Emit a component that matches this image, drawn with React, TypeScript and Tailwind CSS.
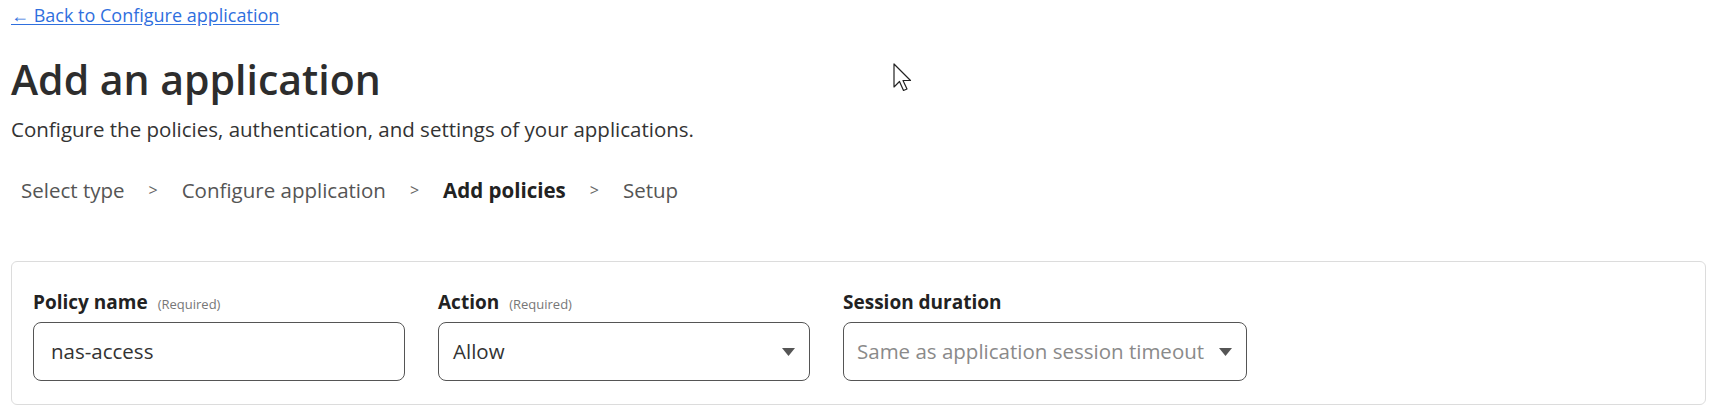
import React from "react";

function Caret() {
  return (
    <svg width="13" height="8" viewBox="0 0 13 8" className="shrink-0">
      <path d="M0 0 H13 L6.5 8 Z" fill="#555555" />
    </svg>
  );
}

function Cursor() {
  return (
    <svg
      width="20"
      height="30"
      viewBox="0 0 20 30"
      className="absolute left-[893px] top-[63px]"
    >
      <path
        d="M1 1 L1 24 L6.5 18.5 L10.5 27.5 L14 26 L10 17.5 L17.5 17.5 Z"
        fill="#ffffff"
        stroke="#222222"
        strokeWidth="1.2"
        strokeLinejoin="round"
      />
    </svg>
  );
}

export default function App() {
  const font = { fontFamily: '"Open Sans", "Noto Sans", sans-serif' };
  return (
    <div
      className="relative w-[1715px] h-[410px] bg-white pl-[11px] pr-[9px] text-[#333333] overflow-hidden"
      style={font}
    >
      <Cursor />
      <div className="pt-[4px] h-[26px]">
        <a
          href="#"
          className="text-[18px] leading-[22px] text-[#2f6fde] underline underline-offset-2"
        >
          ← Back to Configure application
        </a>
      </div>
      <h1 className="mt-[25px] text-[41px] leading-[56px] font-semibold text-[#2d2d2d]">
        Add an application
      </h1>
      <p className="mt-[8px] text-[20.5px] leading-[28px] text-[#333333]">
        Configure the policies, authentication, and settings of your applications.
      </p>
      <nav className="mt-[33px] flex items-center pl-[10px] text-[20.5px] leading-[28px] text-[#555555]">
        <span>Select type</span>
        <span className="mx-[24px] text-[16px] text-[#666666]">&gt;</span>
        <span>Configure application</span>
        <span className="mx-[24px] text-[16px] text-[#666666]">&gt;</span>
        <span className="font-bold text-[#222222]">Add policies</span>
        <span className="mx-[24px] text-[16px] text-[#666666]">&gt;</span>
        <span>Setup</span>
      </nav>
      <div className="mt-[57px] rounded-[6px] border border-[#dcdcdc] bg-white pl-[21px] pt-[27px] pb-[23px] flex gap-[33px]">
        <div className="w-[372px]">
          <div className="flex items-baseline gap-[10px] h-[26px]">
            <span className="text-[19px] leading-[26px] font-bold text-[#222222]">
              Policy name
            </span>
            <span className="text-[13px] text-[#777777]">(Required)</span>
          </div>
          <div className="mt-[7px] h-[59px] rounded-[8px] border border-[#555555] flex items-center px-[17px] text-[20.5px] text-[#333333]">
            nas-access
          </div>
        </div>
        <div className="w-[372px]">
          <div className="flex items-baseline gap-[10px] h-[26px]">
            <span className="text-[19px] leading-[26px] font-bold text-[#222222]">
              Action
            </span>
            <span className="text-[13px] text-[#777777]">(Required)</span>
          </div>
          <div className="mt-[7px] h-[59px] rounded-[8px] border border-[#555555] flex items-center justify-between pl-[14px] pr-[14px] text-[20.5px] text-[#333333]">
            <span>Allow</span>
            <Caret />
          </div>
        </div>
        <div className="w-[404px]">
          <div className="flex items-baseline gap-[10px] h-[26px]">
            <span className="text-[19px] leading-[26px] font-bold text-[#222222]">
              Session duration
            </span>
          </div>
          <div className="mt-[7px] h-[59px] rounded-[8px] border border-[#555555] flex items-center justify-between pl-[13px] pr-[14px] text-[20.5px]">
            <span className="text-[#8a8a8a]">Same as application session timeout</span>
            <Caret />
          </div>
        </div>
      </div>
    </div>
  );
}
